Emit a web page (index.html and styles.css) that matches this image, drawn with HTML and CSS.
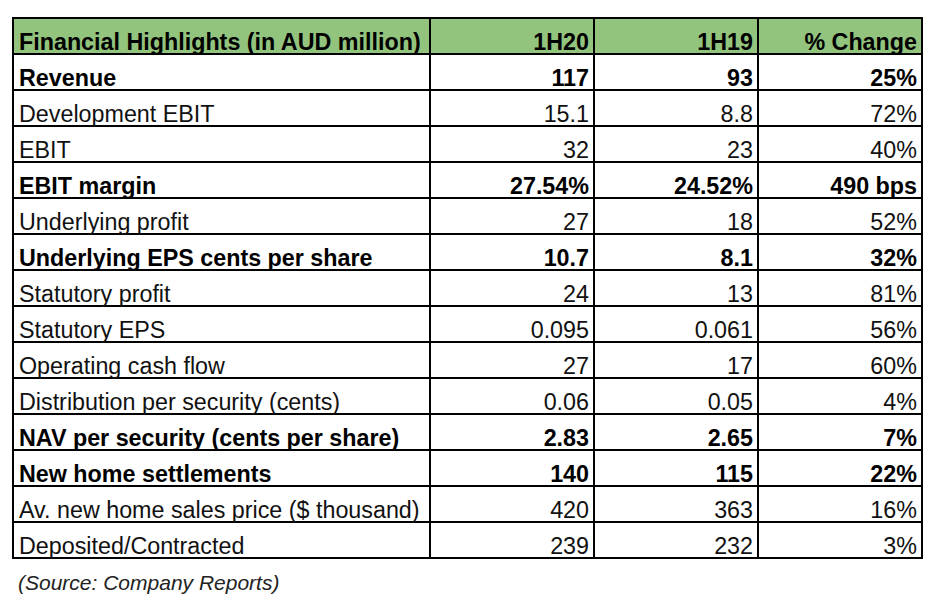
FILE: index.html
```html
<!DOCTYPE html>
<html lang="en">
<head>
<meta charset="utf-8">
<title>Financial Highlights</title>
<link rel="stylesheet" href="styles.css">
</head>
<body>
<div class="page">
  <table class="fin">
    <colgroup>
      <col class="c-label">
      <col class="c-num">
      <col class="c-num">
      <col class="c-num">
    </colgroup>
    <thead>
      <tr class="head">
        <th class="label">Financial Highlights (in AUD million)</th>
        <th>1H20</th>
        <th>1H19</th>
        <th>% Change</th>
      </tr>
    </thead>
    <tbody>
      <tr class="bold"><td class="label">Revenue</td><td>117</td><td>93</td><td>25%</td></tr>
      <tr><td class="label">Development EBIT</td><td>15.1</td><td>8.8</td><td>72%</td></tr>
      <tr><td class="label">EBIT</td><td>32</td><td>23</td><td>40%</td></tr>
      <tr class="bold"><td class="label">EBIT margin</td><td>27.54%</td><td>24.52%</td><td>490 bps</td></tr>
      <tr><td class="label">Underlying profit</td><td>27</td><td>18</td><td>52%</td></tr>
      <tr class="bold"><td class="label">Underlying EPS cents per share</td><td>10.7</td><td>8.1</td><td>32%</td></tr>
      <tr><td class="label">Statutory profit</td><td>24</td><td>13</td><td>81%</td></tr>
      <tr><td class="label">Statutory EPS</td><td>0.095</td><td>0.061</td><td>56%</td></tr>
      <tr><td class="label">Operating cash flow</td><td>27</td><td>17</td><td>60%</td></tr>
      <tr><td class="label">Distribution per security (cents)</td><td>0.06</td><td>0.05</td><td>4%</td></tr>
      <tr class="bold"><td class="label">NAV per security (cents per share)</td><td>2.83</td><td>2.65</td><td>7%</td></tr>
      <tr class="bold"><td class="label">New home settlements</td><td>140</td><td>115</td><td>22%</td></tr>
      <tr><td class="label">Av. new home sales price ($ thousand)</td><td>420</td><td>363</td><td>16%</td></tr>
      <tr><td class="label">Deposited/Contracted</td><td>239</td><td>232</td><td>3%</td></tr>
    </tbody>
  </table>
  <p class="source">(Source: Company Reports)</p>
</div>
</body>
</html>
```

FILE: styles.css
```css
html, body {
  margin: 0;
  padding: 0;
  background: #ffffff;
}

.page {
  padding: 17px 0 0 12px;
  font-family: "Liberation Sans", Arial, sans-serif;
  color: #111111;
}

.fin {
  border-collapse: separate;
  border-spacing: 0;
  table-layout: fixed;
  width: 911px;
  border-left: 2px solid #000;
  border-top: 2px solid #000;
  font-size: 23.3px;
  line-height: 21px;
}

.c-label { width: 417px; }
.c-num { width: 164px; }

.fin th,
.fin td {
  box-sizing: border-box;
  height: 36px;
  padding: 0 4px 0 3px;
  border-right: 2px solid #000;
  border-bottom: 2px solid #000;
  text-align: right;
  vertical-align: bottom;
  white-space: nowrap;
  font-weight: normal;
}

.fin .label {
  text-align: left;
  padding-left: 5px;
}

.head th {
  background: #93c47d;
  font-weight: bold;
  color: #000;
}

.bold td {
  font-weight: bold;
  color: #000;
}

.source {
  margin: 12px 0 0 6px;
  font-size: 21px;
  line-height: 24px;
  font-style: italic;
  color: #222222;
}
```
